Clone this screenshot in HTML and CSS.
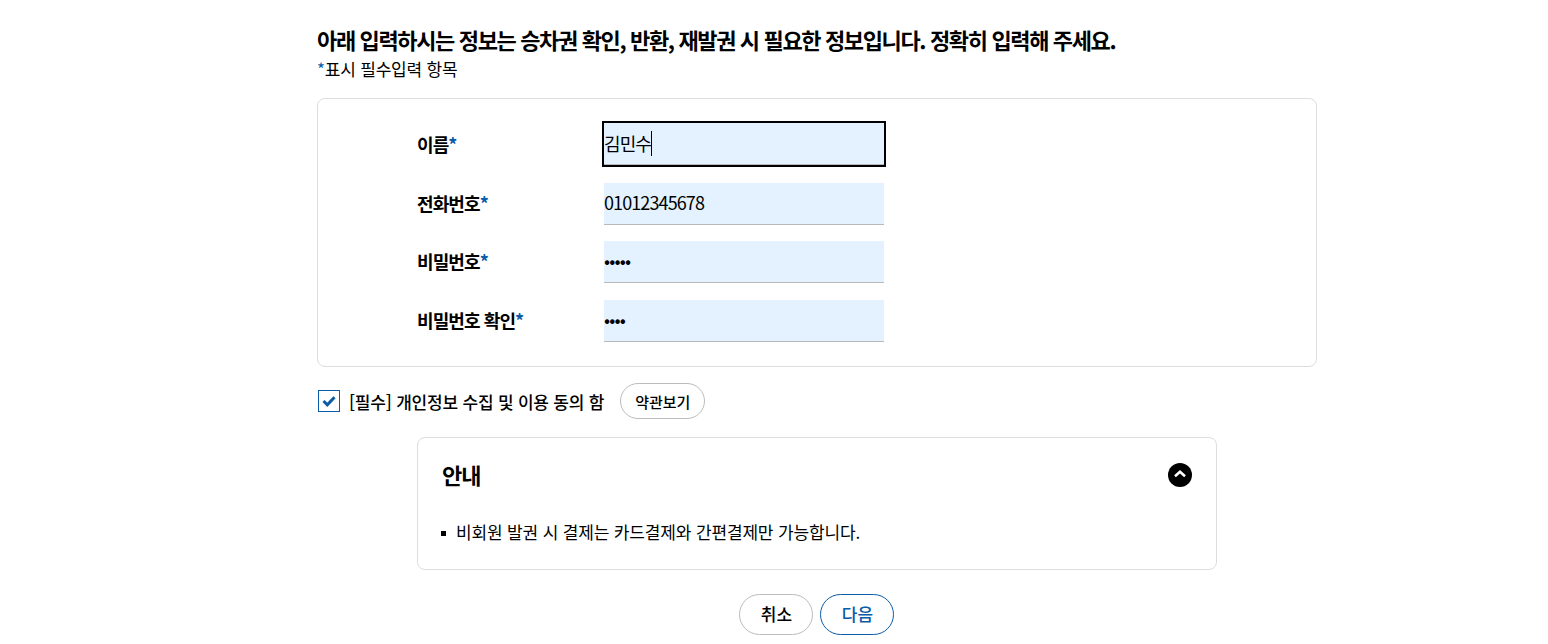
FILE: index.html
```html
<!DOCTYPE html>
<html lang="ko">
<head>
    <meta charset="UTF-8">
    <title>비회원 정보 입력</title>
    <link rel="stylesheet" href="styles.css">
</head>
<body>
    <div class="container">
        <h2 class="title">아래 입력하시는 정보는 승차권 확인, 반환, 재발권 시 필요한 정보입니다. 정확히 입력해 주세요.</h2>
        <p class="required-note"><span class="star">*</span>표시 필수입력 항목</p>

        <form class="form-box">
            <div class="form-row">
                <label class="form-label" for="name">이름<span class="star">*</span></label>
                <div class="field field-focus">
                    <input type="text" id="name" value="김민수">
                    <span class="caret"></span>
                </div>
            </div>
            <div class="form-row">
                <label class="form-label" for="phone">전화번호<span class="star">*</span></label>
                <div class="field"><input type="text" id="phone" value="01012345678"></div>
            </div>
            <div class="form-row">
                <label class="form-label" for="pw">비밀번호<span class="star">*</span></label>
                <div class="field"><input type="password" id="pw" value="12345"></div>
            </div>
            <div class="form-row">
                <label class="form-label" for="pw2">비밀번호 확인<span class="star">*</span></label>
                <div class="field"><input type="password" id="pw2" value="1234"></div>
            </div>
        </form>

        <div class="agree">
            <span class="checkbox">
                <svg width="14" height="12" viewBox="0 0 14 12"><path d="M1.5 6l3.8 3.8L12.5 2.2" fill="none" stroke="#0a5ba8" stroke-width="3"/></svg>
            </span>
            <span class="agree-text">[필수] 개인정보 수집 및 이용 동의 함</span>
            <button type="button" class="btn-terms">약관보기</button>
        </div>

        <div class="notice">
            <div class="notice-head">
                <h3>안내</h3>
                <span class="toggle">
                    <svg width="14" height="10" viewBox="0 0 14 10"><path d="M2 6.2L7 1.8l5 4.4" fill="none" stroke="#fff" stroke-width="2.6"/></svg>
                </span>
            </div>
            <ul class="notice-list">
                <li>비회원 발권 시 결제는 카드결제와 간편결제만 가능합니다.</li>
            </ul>
        </div>

        <div class="actions">
            <button type="button" class="btn">취소</button>
            <button type="button" class="btn btn-primary">다음</button>
        </div>
    </div>
</body>
</html>
```

FILE: styles.css
```css
* {
    margin: 0;
    padding: 0;
    box-sizing: border-box;
    font-family: "Noto Sans CJK KR", "Noto Sans", sans-serif;
}

body {
    background: #fff;
    color: #000;
    overflow: hidden;
}

.container {
    width: 1000px;
    margin-left: 317px;
    padding-top: 23px;
}

.title {
    font-size: 22px;
    font-weight: 700;
    line-height: 32px;
    letter-spacing: -1.36px;
    margin-bottom: 2px;
}

.required-note {
    font-size: 17px;
    line-height: 24px;
    letter-spacing: -0.2px;
}

.star {
    color: #0a5ba8;
}

.form-box {
    margin-top: 17px;
    height: 269px;
    padding: 24px 99px 0;
    border: 1px solid #ddd;
    border-radius: 8px;
}

.form-row {
    display: flex;
    align-items: center;
    height: 42px;
    margin-bottom: 16px;
}

.form-row:first-child {
    margin-bottom: 18px;
}

.form-row:nth-child(3) {
    margin-bottom: 17px;
}

.form-label {
    width: 187px;
    padding-bottom: 2px;
    font-size: 18px;
    font-weight: 700;
    letter-spacing: -0.9px;
}

.form-row:first-child .form-label {
    padding-bottom: 0;
}

.field {
    position: relative;
    width: 280px;
    height: 42px;
}

.field input {
    width: 100%;
    height: 100%;
    padding: 0 0 4px;
    border: none;
    border-bottom: 1px solid #b8b8b8;
    border-radius: 0;
    outline: none;
    background: #e3f2fe;
    color: #000;
    font-size: 18px;
    letter-spacing: -0.9px;
}

.field-focus {
    outline: 2px solid #000;
}

.field-focus input {
    padding-bottom: 2px;
}

.caret {
    position: absolute;
    left: 47px;
    top: 8px;
    width: 1px;
    height: 25px;
    background: #000;
}

.agree {
    display: flex;
    align-items: center;
    margin-top: 16px;
    height: 36px;
}

.checkbox {
    display: flex;
    align-items: center;
    justify-content: center;
    width: 22px;
    height: 22px;
    margin-left: 1px;
    border: 1px solid #0a5ba8;
}

.agree-text {
    margin-left: 9px;
    font-size: 17px;
    font-weight: 500;
    letter-spacing: -0.2px;
}

.btn-terms {
    width: 85px;
    height: 36px;
    margin-left: 16px;
    background: #fff;
    border: 1px solid #bbb;
    border-radius: 18px;
    font-size: 15px;
    font-weight: 500;
}

.notice {
    width: 800px;
    height: 133px;
    margin: 18px auto 0;
    padding: 0 24px;
    border: 1px solid #ddd;
    border-radius: 8px;
}

.notice-head {
    display: flex;
    align-items: center;
    justify-content: space-between;
    height: 74px;
}

.notice-head h3 {
    padding-bottom: 2px;
    font-size: 22px;
    font-weight: 700;
    letter-spacing: -1px;
}

.toggle {
    display: flex;
    align-items: center;
    justify-content: center;
    width: 24px;
    height: 24px;
    border-radius: 50%;
    background: #000;
}

.notice-list {
    list-style: none;
    margin-top: 8px;
}

.notice-list li {
    position: relative;
    padding-left: 14px;
    font-size: 17px;
    line-height: 24px;
    letter-spacing: -0.15px;
}

.notice-list li::before {
    content: "";
    position: absolute;
    left: -1px;
    top: 11px;
    width: 5px;
    height: 5px;
    background: #000;
}

.actions {
    display: flex;
    justify-content: center;
    gap: 7px;
    margin-top: 24px;
    padding-right: 1px;
}

.btn {
    width: 74px;
    height: 41px;
    padding: 0 0 2px 1px;
    background: #fff;
    border: 1px solid #bbb;
    border-radius: 21px;
    color: #000;
    font-size: 17px;
    font-weight: 500;
}

.btn-primary {
    border-color: #0a5ba8;
    color: #0a5ba8;
}
```
